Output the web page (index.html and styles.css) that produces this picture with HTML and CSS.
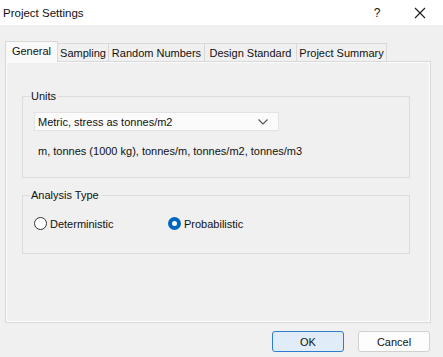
FILE: index.html
```html
<!DOCTYPE html>
<html>
<head>
<meta charset="utf-8">
<link rel="stylesheet" href="styles.css">
</head>
<body>
<div class="window">
  <div class="titlebar">
    <span class="title">Project Settings</span>
    <span class="help">?</span>
    <span class="close"><svg width="12" height="12" viewBox="0 0 12 12"><path d="M1 1 L11 11 M11 1 L1 11" stroke="#1a1a1a" stroke-width="1.1" fill="none"/></svg></span>
  </div>
  <div class="content">
    <div class="tabs">
      <div class="tab active t-general">General</div>
      <div class="tab t-sampling">Sampling</div>
      <div class="tab t-random">Random Numbers</div>
      <div class="tab t-design">Design Standard</div>
      <div class="tab t-summary">Project Summary</div>
    </div>
    <div class="panel">
      <fieldset class="group units">
        <legend>Units</legend>
        <div class="select">
          <span>Metric, stress as tonnes/m2</span>
          <svg width="10" height="6" viewBox="0 0 10 6"><path d="M0.5 0.5 L5 5 L9.5 0.5" stroke="#555" stroke-width="1.1" fill="none"/></svg>
        </div>
        <div class="desc">m, tonnes (1000 kg), tonnes/m, tonnes/m2, tonnes/m3</div>
      </fieldset>
      <fieldset class="group analysis">
        <legend>Analysis Type</legend>
        <div class="radios">
          <label class="radio"><span class="circle"></span>Deterministic</label>
          <label class="radio checked"><span class="circle"></span>Probabilistic</label>
        </div>
      </fieldset>
    </div>
    <div class="buttons">
      <div class="btn default">OK</div>
      <div class="btn">Cancel</div>
    </div>
  </div>
</div>
</body>
</html>
```
FILE: styles.css
```css
html, body {
  margin: 0;
  padding: 0;
}
body {
  width: 443px;
  height: 357px;
  background: #f0f0f0;
  font-family: "Liberation Sans", Arial, sans-serif;
  font-size: 11px;
  color: #111111;
  overflow: hidden;
}
.window {
  width: 443px;
  height: 357px;
  display: flex;
  flex-direction: column;
}
.titlebar {
  height: 25px;
  background: #ffffff;
  display: flex;
  align-items: center;
}
.title {
  margin-left: 3px;
  flex: 1;
  font-size: 11.5px;
}
.help {
  width: 20px;
  margin-right: 27px;
  text-align: center;
  font-size: 12px;
}
.close {
  width: 14px;
  margin-right: 15px;
  display: flex;
  align-items: center;
}
.content {
  flex: 1;
  padding: 16px 12px 0 5px;
  display: flex;
  flex-direction: column;
}
.tabs {
  display: flex;
  align-items: flex-end;
  height: 20px;
  position: relative;
  z-index: 1;
}
.tab {
  height: 18px;
  line-height: 18px;
  padding: 0;
  text-align: center;
  border: 1px solid #d9d9d9;
  border-bottom: none;
  margin-left: -1px;
  background: #f0f0f0;
  box-sizing: border-box;
  white-space: nowrap;
  font-size: 11px;
}
.tab.active {
  height: 21px;
  margin-left: 0;
  margin-bottom: -1px;
  background: #f9f9f9;
  line-height: 18px;
}
.t-general { width: 53px; }
.t-sampling { width: 52px; }
.t-random { width: 97px; }
.t-design { width: 93px; }
.t-summary { width: 91px; }
.panel {
  height: 262px;
  box-sizing: border-box;
  border: 1px solid #d9d9d9;
  box-shadow: inset 1px 1px 0 #fbfbfb, inset -1px -1px 0 #fbfbfb;
  background: #f0f0f0;
  padding: 27px 20px 0 16px;
  display: flex;
  flex-direction: column;
  gap: 10px;
}
.group {
  margin: 0;
  border: 1px solid #dcdcdc;
  padding: 0 0 0 11px;
  min-width: 0;
}
.group legend {
  padding: 0 2px 0 1px;
  margin-left: -4px;
  line-height: 14px;
}
.units {
  height: 89px;
  padding-top: 9px;
  box-sizing: border-box;
  flex: none;
}
.select {
  width: 245px;
  height: 19px;
  box-sizing: border-box;
  background: #fbfbfb;
  border: 1px solid #e3e3e3;
  display: flex;
  align-items: center;
  justify-content: space-between;
  padding: 0 10px 0 3px;
}
.desc {
  margin-top: 14px;
  margin-left: 4px;
}
.analysis {
  height: 66px;
  box-sizing: border-box;
  padding-top: 15px;
  flex: none;
}
.radios {
  display: flex;
}
.radio {
  display: flex;
  align-items: center;
  gap: 3px;
  width: 134px;
}
.circle {
  width: 13px;
  height: 13px;
  box-sizing: border-box;
  border: 1px solid #333;
  border-radius: 50%;
  background: #fff;
}
.radio.checked .circle {
  border: 4px solid #0067c0;
  background: #fff;
}
.buttons {
  display: flex;
  justify-content: flex-end;
  gap: 14px;
  margin-top: 8px;
  margin-right: 1px;
}
.btn {
  width: 72px;
  height: 21px;
  box-sizing: border-box;
  border: 1px solid #d0d0d0;
  border-radius: 3px;
  background: #fdfdfd;
  display: flex;
  align-items: center;
  justify-content: center;
}
.btn.default {
  border-color: #2d7cd0;
  background: #e0ecf8;
}
```
